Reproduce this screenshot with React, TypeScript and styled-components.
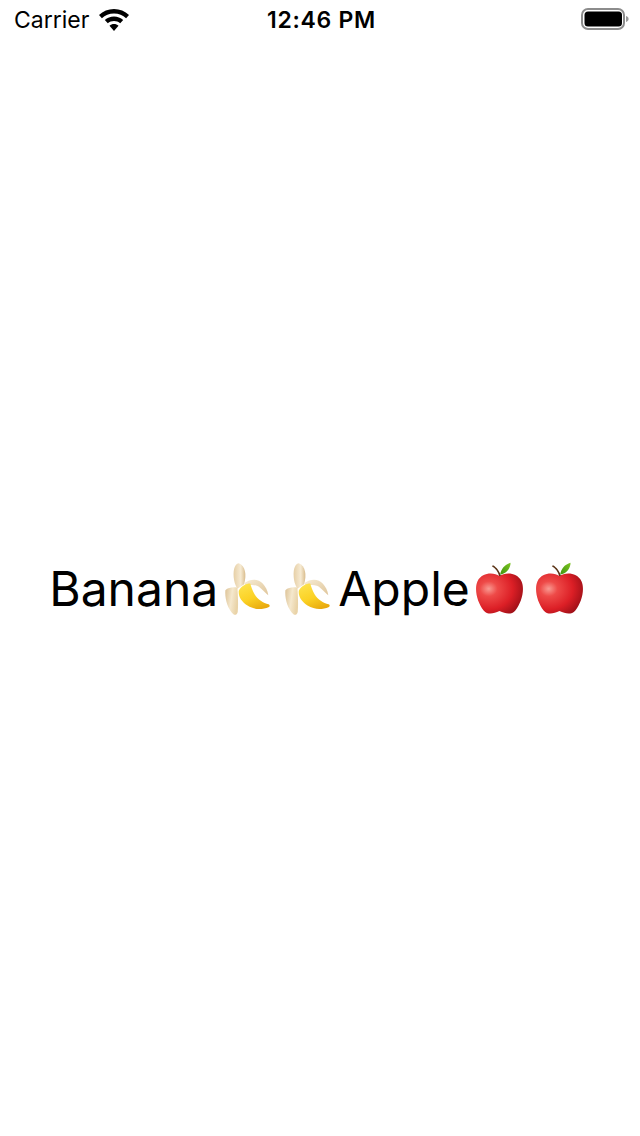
import React from 'react';
import styled, { createGlobalStyle } from 'styled-components';

const GlobalStyle = createGlobalStyle`
  html, body {
    margin: 0;
    padding: 0;
    background: #fff;
  }
`;

const Screen = styled.div`
  width: 640px;
  height: 1136px;
  display: flex;
  flex-direction: column;
  background: #fff;
  color: #000;
  font-family: Inter, "Liberation Sans", sans-serif;
  overflow: hidden;
`;

const StatusBar = styled.div`
  height: 40px;
  display: grid;
  grid-template-columns: 1fr auto 1fr;
  align-items: center;
  padding: 0 11px 0 14px;
`;

const StatusLeft = styled.div`
  display: flex;
  align-items: center;
  gap: 10px;
  font-size: 23px;
`;

const Clock = styled.div`
  font-size: 23px;
  font-weight: 600;
  letter-spacing: 0.7px;
`;

const StatusRight = styled.div`
  display: flex;
  justify-content: flex-end;
  padding-bottom: 2px;
`;

const Content = styled.main`
  flex: 1;
  display: flex;
  align-items: center;
  justify-content: center;
  padding-right: 1px;
`;

const Label = styled.div`
  display: flex;
  align-items: center;
  font-size: 48px;
  white-space: nowrap;
`;

const Fruit = styled.svg`
  width: 47px;
  height: 53px;
  margin: 0 7px 0 6px;
`;

const AppleFruit = styled(Fruit)`
  width: 49px;
  margin: 0 6px 0 5px;
`;

const WifiIcon = () => (
  <svg width="30" height="22" viewBox="0 0 30 22" fill="#000">
    <path d="M15 0C9.200 0 4 2.300 0 6l2.900 3.200C6 6.300 10.300 4.500 15 4.500s9 1.800 12.100 4.700L30 6C26 2.300 20.800 0 15 0z" />
    <path d="M15 7.500c-3.500 0-6.700 1.300-9.200 3.500l3 3.300c1.700-1.400 3.900-2.300 6.200-2.300s4.500.9 6.200 2.300l3-3.300c-2.500-2.200-5.700-3.500-9.200-3.500z" />
    <path d="M15 15c-1.700 0-3.300.6-4.500 1.700L15 22l4.500-5.300C18.300 15.600 16.700 15 15 15z" />
  </svg>
);

const BatteryIcon = () => (
  <svg width="48" height="22" viewBox="0 0 48 22">
    <rect x="1" y="1" width="42" height="20" rx="6" fill="none" stroke="#8c8c8c" strokeWidth="2" />
    <rect x="3.500" y="3.500" width="37.500" height="15" rx="3.500" fill="#000" />
    <path d="M45 8c1.600.4 2.600 1.600 2.600 3s-1 2.600-2.600 3z" fill="#9a9a9a" />
  </svg>
);

const FruitGradients = () => (
  <svg width="0" height="0" style={{ position: 'absolute' }}>
    <defs>
      <linearGradient id="peelTall" x1="0" y1="0" x2="1" y2="0">
        <stop offset="0" stopColor="#e6cfa6" />
        <stop offset="0.6" stopColor="#f6ead2" />
        <stop offset="1" stopColor="#d9bc8c" />
      </linearGradient>
      <linearGradient id="peelLeft" x1="0" y1="0" x2="1" y2="0.3">
        <stop offset="0" stopColor="#dcc296" />
        <stop offset="0.55" stopColor="#f5e8cd" />
        <stop offset="1" stopColor="#e9d3a8" />
      </linearGradient>
      <linearGradient id="peelRight" x1="0" y1="0" x2="1" y2="1">
        <stop offset="0" stopColor="#f7ecd4" />
        <stop offset="1" stopColor="#dfc59a" />
      </linearGradient>
      <linearGradient id="bananaBody" x1="0.2" y1="0" x2="0.7" y2="1">
        <stop offset="0" stopColor="#fde24a" />
        <stop offset="0.55" stopColor="#fbd124" />
        <stop offset="1" stopColor="#e8a90e" />
      </linearGradient>
      <radialGradient id="appleBody" cx="0.27" cy="0.38" r="0.85">
        <stop offset="0" stopColor="#f99a92" />
        <stop offset="0.22" stopColor="#ee4a48" />
        <stop offset="0.6" stopColor="#dc1f26" />
        <stop offset="1" stopColor="#8f0c14" />
      </radialGradient>
      <linearGradient id="appleLeaf" x1="0" y1="1" x2="1" y2="0">
        <stop offset="0" stopColor="#3f9410" />
        <stop offset="1" stopColor="#7cc420" />
      </linearGradient>
    </defs>
  </svg>
);

const Banana = () => (
  <Fruit viewBox="40 22 140 158">
    <path d="M100 88C108 60 104 34 84 26 70 28 66 52 70 76c2 12 6 20 10 26z" fill="url(#peelTall)" />
    <path d="M100 85c20-14 42-14 56 2 8 9 14 20 16 34-12-8-20-22-34-28-10-4-22-4-32 2z" fill="url(#peelRight)" />
    <path d="M84 108c-2 16 8 32 26 44 20 12 42 14 64 4 3-2 3-6-1-8-16-4-32-14-42-30-6-10-10-22-13-32-12 0-28 8-34 22z" fill="url(#bananaBody)" />
    <path d="M80 98C66 96 52 98 44 106c-2 24 6 54 24 72 6 4 12 0 13-8 2-24 0-52-1-72z" fill="url(#peelLeft)" />
  </Fruit>
);

const Apple = () => (
  <AppleFruit viewBox="29 26 142 153">
    <path d="M100 66C84 56 50 54 36 82c-10 24 0 62 18 84 12 14 28 10 46 2 18 8 34 12 46-2 18-22 28-60 18-84-14-28-48-26-64-16z" fill="url(#appleBody)" />
    <path d="M99 66C96 54 88 44 78 38l3-3c11 6 20 18 23 31z" fill="#5c3417" />
    <path d="M102 62c2-16 14-30 30-34 0 16-12 32-30 34z" fill="url(#appleLeaf)" />
  </AppleFruit>
);

export default function App() {
  return (
    <>
      <GlobalStyle />
      <FruitGradients />
      <Screen>
        <StatusBar>
          <StatusLeft>
            Carrier
            <WifiIcon />
          </StatusLeft>
          <Clock>12:46 PM</Clock>
          <StatusRight>
            <BatteryIcon />
          </StatusRight>
        </StatusBar>
        <Content>
          <Label>
            Banana
            <Banana />
            <Banana />
            Apple
            <Apple />
            <Apple />
          </Label>
        </Content>
      </Screen>
    </>
  );
}
